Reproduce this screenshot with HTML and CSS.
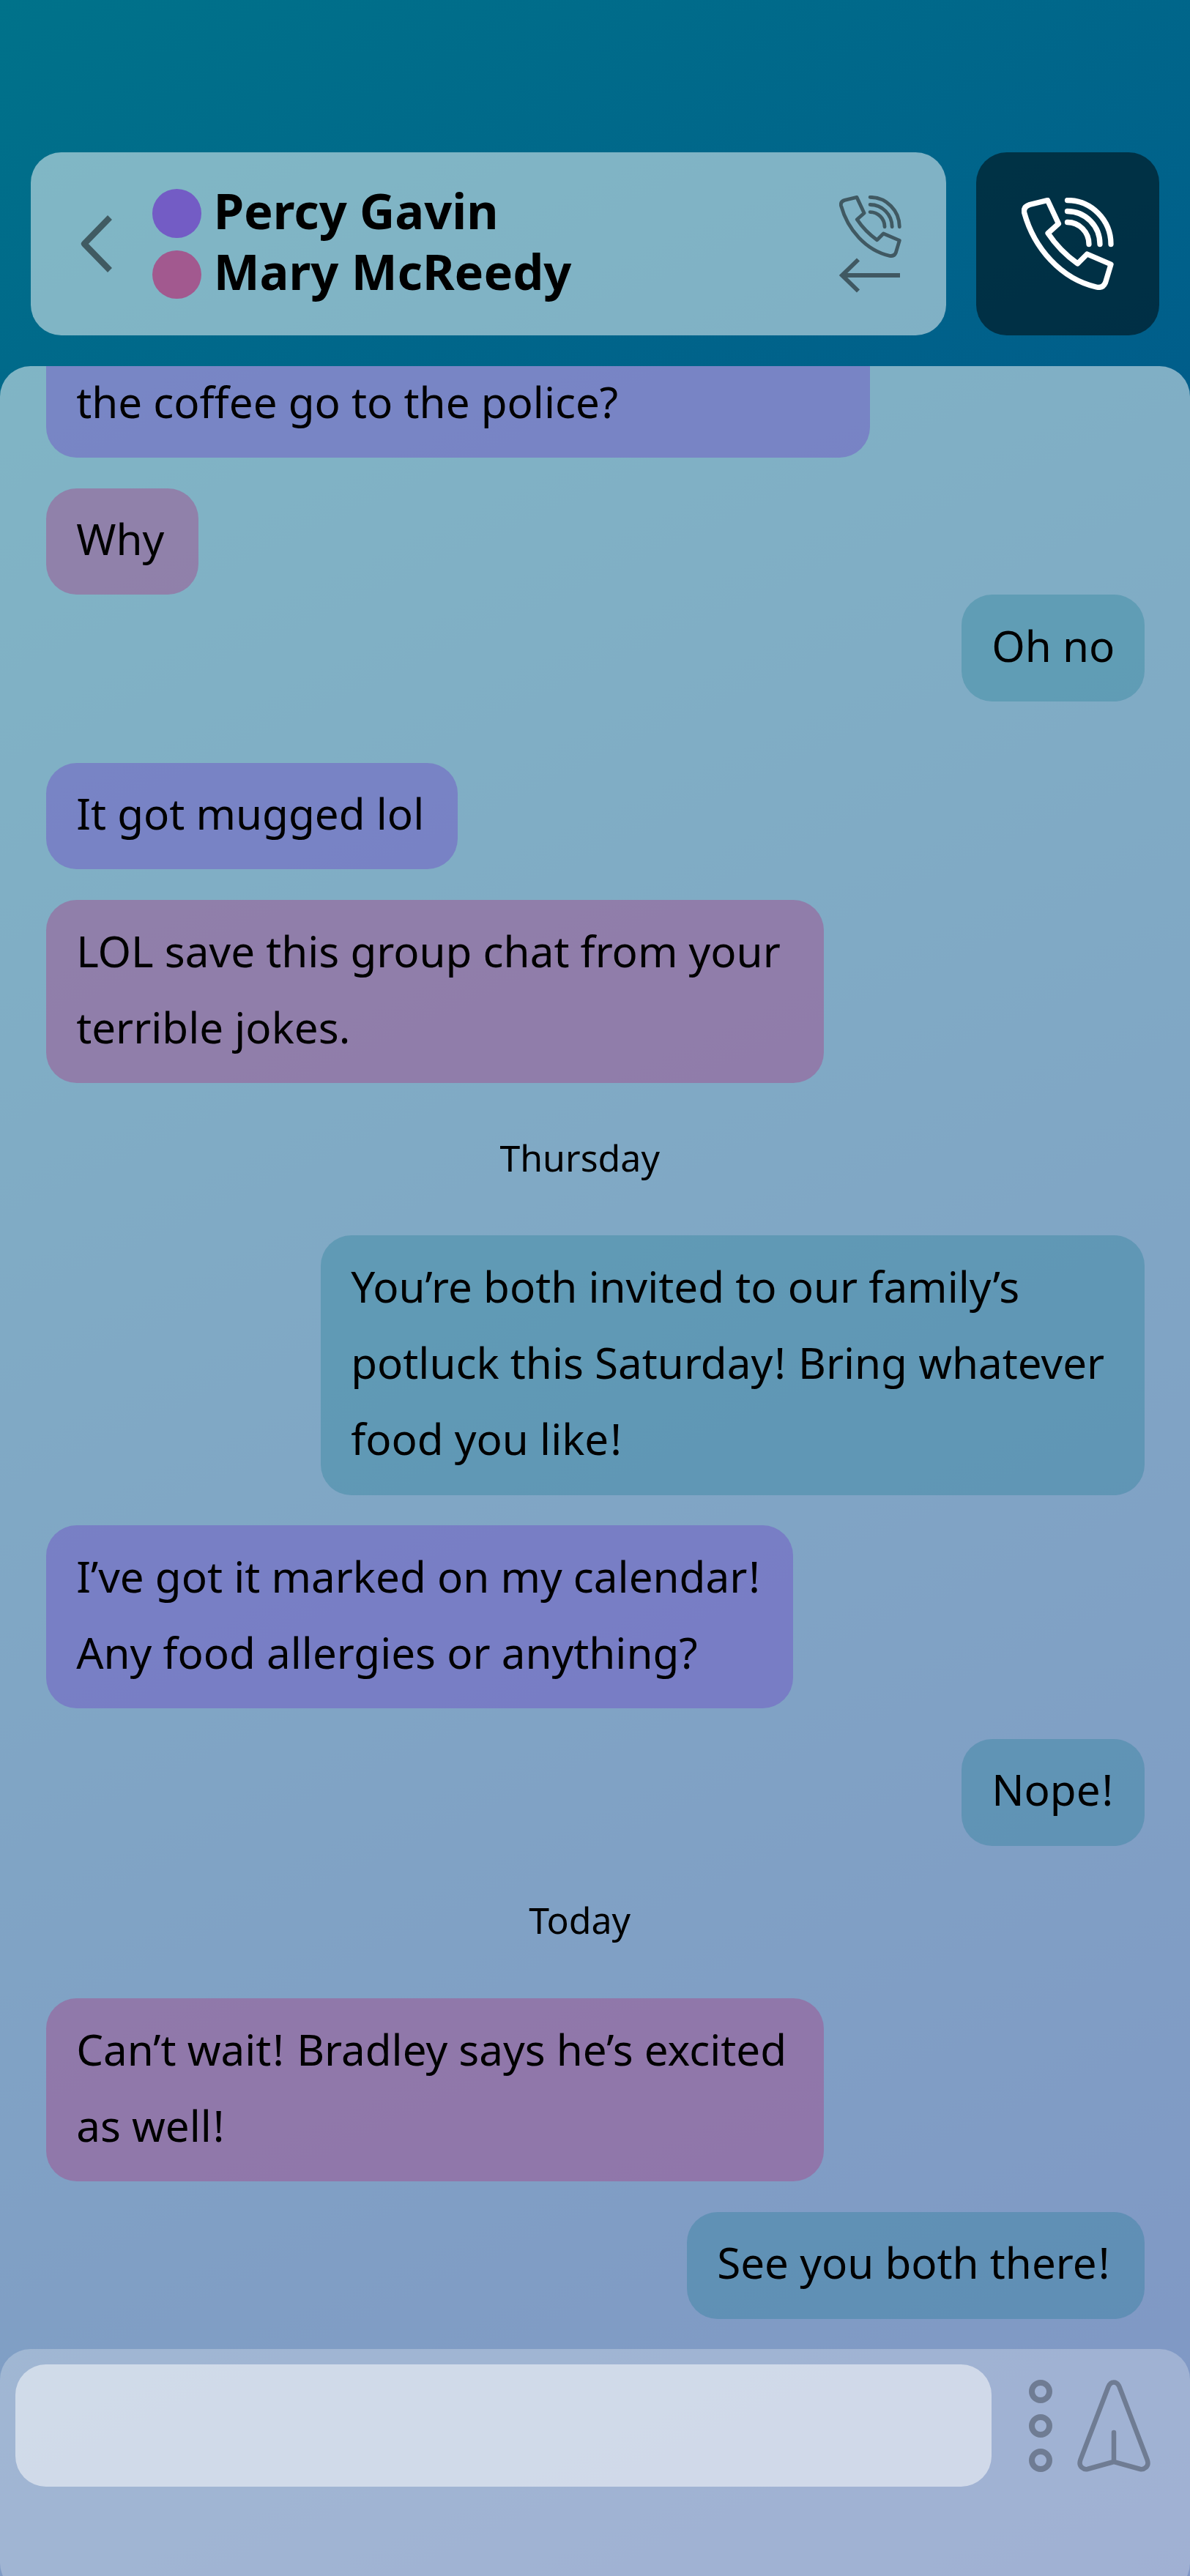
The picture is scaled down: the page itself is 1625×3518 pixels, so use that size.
FILE: index.html
```html
<!DOCTYPE html>
<html lang="en">
<head>
<meta charset="utf-8">
<title>Group chat</title>
<link rel="stylesheet" href="styles.css">
</head>
<body>
<svg class="symbols" aria-hidden="true">
  <symbol id="call" viewBox="0 0 126 126">
    <path d="M35.500 3.500 11 9.500Q2 12.500 3.700 20.500C17 69 54 111 102 122Q111 124 114.500 116L122 91 89.500 77 76.500 90C61 79 47 65 36 48.500L50.500 35.500Z"/>
    <path d="M62.500 3.500a59.500 60 0 0 1 59.500 60M62.500 18.500a44.500 45 0 0 1 44.500 45M62.500 33.500a29.500 30 0 0 1 29.500 30"/>
  </symbol>
</svg>
<div class="screen">
  <header class="header">
    <div class="contact">
      <svg class="back" viewBox="0 0 50 80"><path d="M45 4 10 40l35 36"/></svg>
      <ul class="people">
        <li><span class="dot percy"></span><span class="name">Percy Gavin</span></li>
        <li><span class="dot mary"></span><span class="name">Mary McReedy</span></li>
      </ul>
      <div class="last-call">
        <svg class="call-small"><use href="#call"/></svg>
        <svg class="arrow" viewBox="0 0 84 48"><path d="M83 24H5M26 2.500 4 24l22 21.500"/></svg>
      </div>
    </div>
    <button class="call-button" aria-label="Call"><svg class="call-large"><use href="#call"/></svg></button>
  </header>
  <main class="chat">
    <p class="msg from-percy w270 cut">the coffee go to the police?</p>
    <p class="msg from-mary w50">Why</p>
    <p class="msg own w60 tight">Oh no</p>
    <p class="msg from-percy w135 spaced">It got mugged lol</p>
    <p class="msg from-mary w255">LOL save this group chat from your terrible jokes.</p>
    <p class="day">Thursday</p>
    <p class="msg own w270">You’re both invited to our family’s potluck this Saturday<span class="bang">!</span> Bring whatever food you like<span class="bang">!</span></p>
    <p class="msg from-percy w245">I’ve got it marked on my calendar<span class="bang">!</span> Any food allergies or anything?</p>
    <p class="msg own w60">Nope<span class="bang">!</span></p>
    <p class="day">Today</p>
    <p class="msg from-mary w255">Can’t wait<span class="bang">!</span> Bradley says he’s excited as well<span class="bang">!</span></p>
    <p class="msg own w150">See you both there<span class="bang">!</span></p>
    <footer class="composer">
      <div class="field"></div>
      <svg class="more" viewBox="0 0 32 126"><circle cx="16" cy="16" r="12"/><circle cx="16" cy="63" r="12"/><circle cx="16" cy="110" r="12"/></svg>
      <svg class="send" viewBox="0 0 100 126"><path d="M42.500 9.500Q45 3.500 50 3.500T57.500 9.500L95.500 109Q98 116 94 119.500T86 122L50 112 14 122Q10 123 6 119.500T4.500 109ZM50 112V72"/></svg>
    </footer>
  </main>
</div>
</body>
</html>
```
FILE: styles.css
```css
:root { --u: 4.16667px; }
* { box-sizing: border-box; margin: 0; padding: 0; }
body { font-family: "Noto Sans", sans-serif; color: #000; }
.symbols { display: none; }
.screen {
  width: 1625px;
  height: 3518px;
  overflow: hidden;
  display: flex;
  flex-direction: column;
  background: linear-gradient(155.21deg, #00728a, #002d8b);
}
svg { flex: none; fill: none; stroke: currentColor; }
.header {
  flex: none;
  display: flex;
  gap: calc(10 * var(--u));
  height: 500px;
  padding: calc(50 * var(--u)) calc(10 * var(--u)) calc(10 * var(--u));
}
.contact {
  flex: 1;
  display: flex;
  align-items: center;
  padding: 0 61px 0 63px;
  border-radius: calc(10 * var(--u));
  background: rgba(255, 255, 255, .5);
}
.back { width: 50px; height: 80px; margin-right: 53.700px; color: rgba(0, 0, 0, .5); stroke-width: 8.300; stroke-linejoin: round; }
.people { flex: 1; list-style: none; font-size: calc(16 * var(--u)); font-weight: 700; line-height: calc(20 * var(--u)); }
.people li { display: flex; align-items: center; gap: calc(4 * var(--u)); height: calc(20 * var(--u)); }
.name { padding-bottom: 9px; }
.dot { width: calc(16 * var(--u)); height: calc(16 * var(--u)); border-radius: 50%; }
.percy { background: #735cc5; }
.mary { background: #a2598f; }
.last-call { display: flex; flex-direction: column; color: rgba(0, 0, 0, .5); }
.call-small { width: 85px; height: 85px; stroke-width: 7.200; }
.arrow { width: 84px; height: 48px; stroke-width: 5.800; }
.call-button {
  width: calc(60 * var(--u));
  border: 0;
  border-radius: calc(10 * var(--u));
  background: rgba(0, 0, 0, .5);
  color: #fff;
  display: grid;
  place-items: center;
}
.call-large { width: 126px; height: 126px; stroke-width: 7.300; }
#call { stroke-linecap: round; stroke-linejoin: round; }
.chat {
  flex: 1;
  min-height: 0;
  overflow: hidden;
  display: flex;
  flex-direction: column;
  border-radius: calc(10 * var(--u)) calc(10 * var(--u)) 0 0;
  background: rgba(255, 255, 255, .5);
}
.msg {
  flex: none;
  align-self: flex-start;
  margin: calc(10 * var(--u)) calc(15 * var(--u)) 0;
  padding: 17.500px 0 24.167px calc(10 * var(--u));
  border-radius: calc(10 * var(--u));
  font-size: calc(14 * var(--u));
  line-height: calc(25 * var(--u));
}
.bang { padding: 0 2px; }
.own { align-self: flex-end; background: rgba(0, 110, 136, .25); }
.from-percy { background: rgba(111, 87, 197, .5); }
.from-mary { background: rgba(160, 80, 143, .5); }
.cut { margin-top: calc(-30 * var(--u)); padding-top: 121.667px; }
.tight { margin-top: 0; }
.spaced { margin-top: calc(20 * var(--u)); }
.w50 { width: calc(50 * var(--u)); }
.w60 { width: calc(60 * var(--u)); }
.w135 { width: calc(135 * var(--u)); }
.w150 { width: calc(150 * var(--u)); }
.w245 { width: calc(245 * var(--u)); }
.w255 { width: calc(255 * var(--u)); }
.w270 { width: calc(270 * var(--u)); }
.day {
  flex: none;
  width: calc(380 * var(--u));
  height: calc(30 * var(--u));
  margin-top: calc(10 * var(--u));
  line-height: 120px;
  font-size: calc(12 * var(--u));
  text-align: center;
}
.composer {
  flex: none;
  display: flex;
  align-items: flex-start;
  height: calc(80 * var(--u));
  margin-top: calc(10 * var(--u));
  padding: calc(5 * var(--u));
  border-radius: calc(10 * var(--u));
  background: rgba(255, 255, 255, .25);
  color: rgba(0, 0, 0, .3);
}
.field { width: calc(320 * var(--u)); height: calc(40 * var(--u)); border-radius: calc(10 * var(--u)); background: rgba(255, 255, 255, .5); }
.more { width: 32px; height: 126px; margin: 20.800px 34px 0 50.800px; stroke-width: 8; }
.send { width: 100px; height: 126px; margin-top: 20.800px; stroke-width: 6.500; stroke-linecap: round; stroke-linejoin: round; }
```
